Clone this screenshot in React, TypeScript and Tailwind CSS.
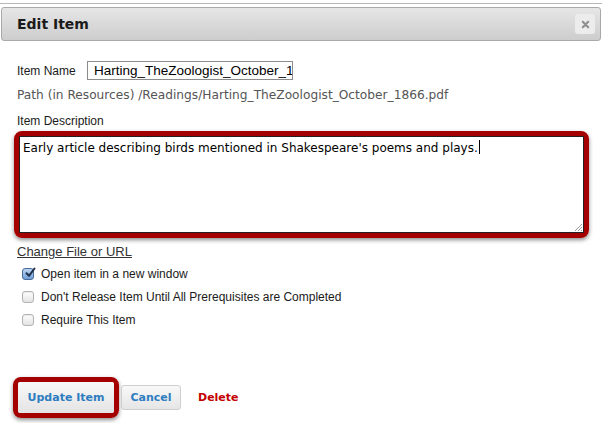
import React from 'react';

const sans = "font-['Liberation_Sans',Arial,sans-serif]";
const dv = "font-['DejaVu_Sans',Verdana,sans-serif]";

function Checkbox({ checked }: { checked?: boolean }) {
  if (checked) {
    return (
      <span className="relative flex h-[12px] w-[12px] items-center justify-center rounded-[3px] border border-[#4a6c9b] bg-gradient-to-b from-[#bcd6f3] to-[#6f9fd8]">
        <svg viewBox="0 0 12 12" className="absolute -top-[2px] left-[1px] h-[12px] w-[12px]">
          <path d="M2.5 6.2 L5 8.8 L10.5 1.5" fill="none" stroke="#1f2f4a" strokeWidth="2" strokeLinecap="round" strokeLinejoin="round" />
        </svg>
      </span>
    );
  }
  return <span className="h-[12px] w-[12px] rounded-[3px] border border-[#b3b3b3] bg-gradient-to-b from-[#ffffff] to-[#e2e2e2] shadow-[inset_0_1px_1px_rgba(0,0,0,0.08)]" />;
}

export default function App() {
  const options = [
    { label: 'Open item in a new window', checked: true },
    { label: "Don't Release Item Until All Prerequisites are Completed", checked: false },
    { label: 'Require This Item', checked: false },
  ];

  return (
    <div className="h-[423px] w-[602px] overflow-hidden bg-white pt-[3px]">
      <div className="h-px bg-[#b8b8b8]" />

      {/* Dialog title bar */}
      <div className="mx-[1px] mt-[3px] flex h-[34px] items-center justify-between rounded-[3px] border border-[#a9a9a9] bg-gradient-to-b from-[#e6e6e6] to-[#cdcdcd] pl-[15px] pr-[5px]">
        <h1 className={`${dv} text-[14px] font-bold text-[#1a1a1a]`}>Edit Item</h1>
        <button className="flex h-[20px] w-[20px] items-center justify-center rounded-[3px] bg-[#ececec]">
          <svg viewBox="0 0 10 10" className="h-[9px] w-[9px]">
            <path d="M2 2 L8 8 M8 2 L2 8" stroke="#8f8f8f" strokeWidth="2.4" strokeLinecap="round" />
          </svg>
        </button>
      </div>

      <div className="px-[17px]">
        {/* Item name */}
        <div className="mt-[20px] flex items-center">
          <label className={`${sans} w-[70px] text-[12px] text-[#1a1a1a]`}>Item Name</label>
          <div className="h-[19px] w-[206px] overflow-hidden whitespace-nowrap border border-[#8c8c8c] px-[6px] text-[13.5px] leading-[17px] text-black">
            <span className={sans}>Harting_TheZoologist_October_1866</span>
          </div>
        </div>

        <div className={`${dv} mt-[6px] whitespace-nowrap text-[12.2px] text-[#555]`}>
          Path (in Resources) /Readings/Harting_TheZoologist_October_1866.pdf
        </div>

        <div className={`${sans} mt-[8px] text-[12px] text-[#1a1a1a]`}>Item Description</div>

        {/* Highlighted textarea */}
        <div className="-ml-[3px] mt-[1px] w-[575px] rounded-[8px] border-[5px] border-[#a50000] shadow-[0_2px_4px_rgba(0,0,0,0.45)]">
          <div className="relative h-[97px] border border-[#222] bg-white px-[3px] pt-px">
            <p className={`${dv} text-[12px] leading-[15px] text-black`}>
              Early article describing birds mentioned in Shakespeare's poems and plays.
              <span className="ml-[1px] inline-block h-[14px] w-px translate-y-[2px] bg-black" />
            </p>
            <svg viewBox="0 0 8 8" className="absolute bottom-[1px] right-[1px] h-[8px] w-[8px]">
              <path d="M1 8 L8 1 M4 8 L8 4 M7 8 L8 7" stroke="#999" strokeWidth="1" />
            </svg>
          </div>
        </div>

        <a className={`${sans} mt-[6px] inline-block text-[13px] leading-[15px] text-[#333] underline`}>Change File or URL</a>

        <div className="mt-[4px] flex flex-col gap-[8px] pl-[5px]">
          {options.map((o) => (
            <div key={o.label} className="flex h-[15px] items-center gap-[7px]">
              <Checkbox checked={o.checked} />
              <span className={`${sans} text-[12px] text-[#1a1a1a]`}>{o.label}</span>
            </div>
          ))}
        </div>

        {/* Footer buttons */}
        <div className="-ml-[4px] mt-[50px] flex items-center">
          <div className="rounded-[8px] border-[5px] border-[#a50000] shadow-[0_2px_4px_rgba(0,0,0,0.45)]">
            <button className={`${dv} h-[31px] w-[96px] rounded-[2px] bg-gradient-to-b from-[#f8f8f8] to-[#e4e4e4] text-[11px] font-bold text-[#2f7dc1]`}>
              Update Item
            </button>
          </div>
          <button className={`${dv} ml-[2px] h-[25px] w-[60px] rounded-[3px] border border-[#cfcfcf] bg-gradient-to-b from-[#f8f8f8] to-[#e6e6e6] text-[11px] font-bold text-[#2f7dc1]`}>
            Cancel
          </button>
          <span className={`${dv} ml-[17px] text-[11px] font-bold text-[#c40000]`}>Delete</span>
        </div>
      </div>
    </div>
  );
}
